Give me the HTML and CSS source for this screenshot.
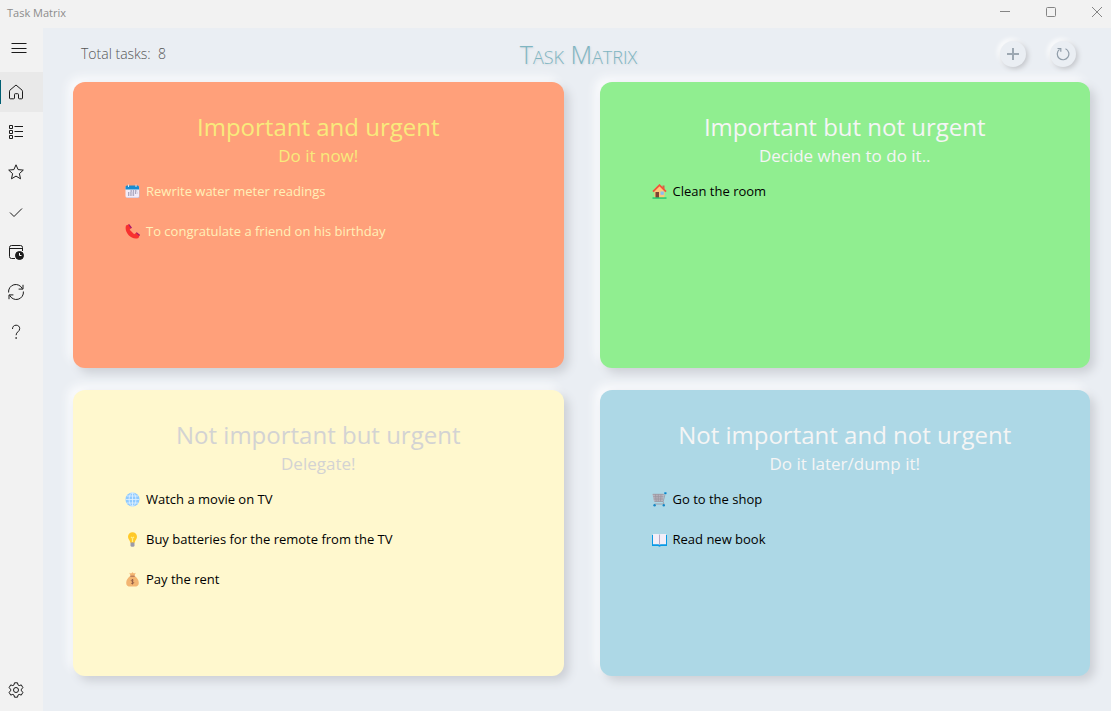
FILE: index.html
```html
<!DOCTYPE html>
<html lang="en">
<head>
  <meta charset="utf-8" />
  <meta name="viewport" content="width=device-width, initial-scale=1" />
  <title>Task Matrix</title>
  <link rel="stylesheet" href="styles.css">
</head>
<body>
  <div class="titlebar">
    <span>Task Matrix</span>
    <div class="window-buttons">
      <button type="button" aria-label="Minimize"><svg viewBox="0 0 10 10"><path d="M0 4.5h10"/></svg></button>
      <button type="button" aria-label="Maximize"><svg viewBox="0 0 10 10"><rect x=".5" y=".5" width="9" height="9" rx="1"/></svg></button>
      <button type="button" aria-label="Close"><svg viewBox="0 0 10 10"><path d="M0 0l10 10M10 0L0 10"/></svg></button>
    </div>
  </div>

  <div class="shell">
    <nav class="sidebar">
      <button type="button" class="menu" aria-label="Menu"><svg viewBox="0 0 16 16"><path d="M.5 3.5h15M.5 8.5h15M.5 12.5h15"/></svg></button>
      <a href="#home" class="active" aria-label="Home"><svg viewBox="0 0 16 16"><path d="M1.5 7.2a1.5 1.5 0 0 1 .5-1.1L8 1l6 5.1a1.5 1.5 0 0 1 .5 1.1V14a.8.8 0 0 1-.8.8h-2.4a.8.8 0 0 1-.8-.8v-3.5a.8.8 0 0 0-.8-.8H7.3a.8.8 0 0 0-.8.8V14a.8.8 0 0 1-.8.8H2.3a.8.8 0 0 1-.8-.8z"/></svg></a>
      <a href="#list" aria-label="List"><svg viewBox="0 0 16 16"><path d="M1.5 1.5h3v3h-3zM1.5 6.5h3v3h-3zM1.5 11.5h3v3h-3zM6.5 2.5h8.5M6.5 7.5h8.5M6.5 12.5h8.5"/></svg></a>
      <a href="#favorites" aria-label="Favorites"><svg viewBox="0 0 16 16"><path d="M8 .8l2.1 4.8 5.2.5-3.9 3.5 1.1 5.2L8 12.1l-4.5 2.7 1.1-5.2L.7 6.1l5.2-.5z"/></svg></a>
      <a href="#done" aria-label="Done"><svg viewBox="0 0 16 16"><path d="M2 8.5l4 4 8-8"/></svg></a>
      <a href="#schedule" aria-label="Schedule"><svg viewBox="0 0 16 16"><path d="M7 14.5H3.5a2 2 0 0 1-2-2v-9a2 2 0 0 1 2-2h9a2 2 0 0 1 2 2V7M1.5 4.5h13"/><circle class="solid" cx="11.5" cy="11.5" r="4"/><path class="hand" d="M11.5 9v2.5h2"/></svg></a>
      <a href="#sync" aria-label="Sync"><svg viewBox="0 0 16 16"><path d="M.6 8.5A7.2 7.2 0 0 1 14.3 4.7M15 .8v4.3h-4.4M15.4 7.5A7.2 7.2 0 0 1 1.7 11.3M1 15.2v-4.3h4.4"/></svg></a>
      <a href="#help" aria-label="Help"><svg viewBox="0 0 16 16"><path d="M4.5 5c0-2.4 1.4-3.8 3.6-3.8s3.6 1.4 3.6 3.4c0 3.2-3.6 3.2-3.6 6.6"/><circle class="solid" cx="8.1" cy="14" r=".4"/></svg></a>
      <a href="#settings" class="settings" aria-label="Settings"><svg viewBox="0 0 16 16"><path d="M6.5.8h3l.5 2.1 1.2.7 2.1-.7 1.6 2.8-1.5 1.5v1.6l1.5 1.5-1.6 2.8-2.1-.7-1.2.7-.5 2.1h-3L6 13.1l-1.2-.7-2.1.7-1.6-2.8 1.5-1.5V7.2L1.1 5.7l1.6-2.8 2.1.7L6 2.9z"/><circle cx="8" cy="8" r="2.5"/></svg></a>
    </nav>

    <main>
      <header>
        <div class="total">Total tasks:&nbsp; 8</div>
        <h1>Task Matrix</h1>
        <div class="actions">
          <button type="button" aria-label="Add task"><svg viewBox="0 0 14 14"><path class="plus" d="M7 1v12M1 7h12"/></svg></button>
          <button type="button" aria-label="Refresh"><svg viewBox="0 0 14 14"><path d="M9.5 1.7A5.8 5.8 0 1 1 3.5 2.4M1.5 1.5h3.3v3.3"/></svg></button>
        </div>
      </header>

      <div class="matrix">
        <section class="card do">
          <h2>Important and urgent</h2>
          <p>Do it now!</p>
          <ul>
            <li>
              <svg viewBox="0 0 15 15"><rect x="1" y="3" width="13.5" height="11" rx="1.5" fill="#bcb3cf"/><rect x=".5" y="2" width="13.5" height="11.5" rx="1.5" fill="#f2ecf8"/><path d="M.5 5.5V3A1.5 1.5 0 0 1 2 1.5h10.5A1.5 1.5 0 0 1 14 3v2.5z" fill="#178bd0"/><path d="M3.5.5v2.5M11 .5v2.5" stroke="#d9e6f2"/><path d="M5.5 7h7M3 9h9.5M3 11h7" stroke="#626486" stroke-width="1.2" stroke-dasharray="1.3 1"/></svg>
              Rewrite water meter readings
            </li>
            <li>
              <svg viewBox="0 0 15 15"><path d="M1 1.5L4 .3l2.5 3.2-1.8 2.3 4.5 4.5 2.3-1.7 3.2 2.5-1.2 2.8C6.5 16.5-1.2 8.5 1 1.5z" fill="#f8312f"/><path d="M3.3.6L4.3.2l2.6 3.2-1 1.3zM11 9l.8-.7 3.1 2.5-.6 1.2z" fill="#a71b70"/></svg>
              To congratulate a friend on his birthday
            </li>
          </ul>
        </section>

        <section class="card decide">
          <h2>Important but not urgent</h2>
          <p>Decide when to do it..</p>
          <ul>
            <li>
              <svg viewBox="0 0 15 15"><path d="M10.5 1.5h2v4h-2z" fill="#c96b4b"/><path d="M2.5 7l5-5.5 5 5.5v7h-10z" fill="#ffc779"/><path d="M3.5 8h3.5v6H3.5z" fill="#7d4533"/><path d="M8.5 7.5h3.3v3.3H8.5z" fill="#86bff2"/><path d="M1 7.7l6.5-6.5L14 7.7" fill="none" stroke="#f4523b" stroke-width="1.8"/><path d="M.5 13.3h14v1.5H.5z" fill="#24ca70"/></svg>
              Clean the room
            </li>
          </ul>
        </section>

        <section class="card delegate">
          <h2>Not important but urgent</h2>
          <p>Delegate!</p>
          <ul>
            <li>
              <svg viewBox="0 0 15 15"><circle cx="7.5" cy="7.5" r="7" fill="#8fcaff"/><g fill="none" stroke="#e3f2ff" stroke-width=".8"><ellipse cx="7.5" cy="7.5" rx="3.4" ry="6.8"/><path d="M7.5.7v13.6M.7 7.5h13.6M2 4h11M2 11h11"/></g></svg>
              Watch a movie on TV
            </li>
            <li>
              <svg viewBox="0 0 15 15"><path d="M5.5 10h4v4l-1 .8h-2l-1-.8z" fill="#9b9baa"/><path d="M3 4.8a4.5 4.5 0 0 1 9 0c0 2.4-1.7 3-2.3 5.7H5.3C4.7 7.8 3 7.2 3 4.8z" fill="#ffc928"/><path d="M6 5l1.5 1.2L9 5M7.5 6v4" fill="none" stroke="#fff08a" stroke-width="1.2"/></svg>
              Buy batteries for the remote from the TV
            </li>
            <li>
              <svg viewBox="0 0 15 15"><path d="M5.5 3.8L4.3.8l1.8.7L7.5.2l1.4 1.3 1.8-.7-1.2 3c2.5 1.8 4.3 4.3 4.3 7.1 0 2.6-1.8 3.7-4 3.7H5.2c-2.2 0-4-1.1-4-3.7 0-2.8 1.8-5.3 4.3-7.1z" fill="#f3b572"/><path d="M5.3 4.2h4.4" stroke="#a56953"/><path d="M8.6 8.2C7.5 7.3 6.2 7.7 6.3 8.6c.1 1.2 2.4.7 2.4 2 0 1.1-1.5 1.3-2.6.6M7.5 7v5.4" fill="none" stroke="#8c5543" stroke-width=".8"/></svg>
              Pay the rent
            </li>
          </ul>
        </section>

        <section class="card later">
          <h2>Not important and not urgent</h2>
          <p>Do it later/dump it!</p>
          <ul>
            <li>
              <svg viewBox="0 0 15 15"><path d="M.5 2h11.3l-1 7.5H2z" fill="#b8b3bd"/><path d="M.8 2.3h11M1.2 4.7h10.3M1.7 7h9.5M3.5 2.3l.7 7M6.3 2.3v7M9 2.3l-.5 7M13.3 1.2L11.2 9.5H2.5M11 9.5l1 2.5H2.5" fill="none" stroke="#9a959f" stroke-width=".8"/><path d="M12.3 1.2h2.2" stroke="#0084ce" stroke-width="1.8"/><circle cx="2.6" cy="13.3" r="1.2" fill="#1687c5"/><circle cx="11.8" cy="13.3" r="1.2" fill="#1687c5"/></svg>
              Go to the shop
            </li>
            <li>
              <svg viewBox="0 0 15 15"><path d="M0 3h15v11H9l-1.5.7L6 14H0z" fill="#0899e5"/><path d="M1 2h5.5l1 .8 1-.8H14v10.3H8.5l-1 .7-1-.7H1z" fill="#f3eef8"/><path d="M7.5 2.8V13" stroke="#b6a9c6"/></svg>
              Read new book
            </li>
          </ul>
        </section>
      </div>
    </main>
  </div>
</body>
</html>
```
FILE: styles.css
```css
* { box-sizing:border-box; }
body {
  margin:0; min-height:100vh; display:flex; flex-direction:column;
  font-family:"Open Sans", "Noto Sans", sans-serif; font-size:13px;
  background:#f2f2f2; color:#000;
}
h1, h2, p, ul { margin:0; padding:0; font-weight:400; }
button { border:none; background:none; padding:0; cursor:pointer; }
svg { display:block; fill:none; }

.titlebar {
  height:28px; padding:0 9px 4px 7px;
  display:flex; align-items:center; justify-content:space-between;
  font-size:11px; color:#8c8c8c;
}
.window-buttons { display:flex; gap:36px; }
.window-buttons svg { width:10px; height:10px; stroke:#858585; }

.shell { flex:1; display:flex; }

.sidebar { width:43px; padding-bottom:1px; display:flex; flex-direction:column; }
.sidebar a, .menu { height:40px; padding-left:8px; display:flex; align-items:center; }
.sidebar .menu { height:44px; padding:0 0 4px 11px; }
.sidebar svg { width:16px; height:16px; stroke:#1b1b1b; stroke-width:1; }
.sidebar .active {
  background:linear-gradient(#005f73, #005f73) left center / 1px 24px no-repeat #e9e9e9;
}
.sidebar .settings { margin-top:auto; }
.solid { fill:#1b1b1b; }
.hand { stroke:#fff; }

main {
  flex:1; padding:0 21px 35px 30px;
  display:flex; flex-direction:column;
  background:#eaeef3;
}
header {
  height:54px; padding:0 14px 3px 8px;
  display:grid; grid-template-columns:1fr auto 1fr; align-items:center;
}
.total { font-size:14px; font-weight:300; color:#555; }
h1 {
  font-size:25px; line-height:32px; font-weight:300; font-variant:small-caps;
  color:#7fb5c1; text-shadow:1px 1px 2px #d3d8df;
}
.actions { display:flex; justify-content:flex-end; gap:24px; }
.actions button {
  width:26px; height:26px; border-radius:50%;
  display:flex; align-items:center; justify-content:center;
  background:#eaeef3; box-shadow:2px 2px 5px #c4c6cb, -2px -2px 5px #fff;
}
.actions svg { width:14px; height:14px; stroke:#8f9ca8; stroke-width:1.2; }
.actions .plus { stroke:#9da8b2; stroke-width:2; }

.matrix {
  flex:1; display:grid; gap:22px 36px;
  grid-template-columns:1fr 1fr; grid-template-rows:1fr 1fr;
}
.card {
  padding:27px 52px; border-radius:12px;
  box-shadow:5px 5px 10px #cdd0d6, -5px -5px 10px #fafbfd;
}
.card h2 { font-size:24px; line-height:36px; text-align:center; }
.card p { font-size:17px; line-height:22px; text-align:center; }
.card ul { margin-top:4px; list-style:none; }
.card li { height:40px; display:flex; align-items:center; gap:6px; }
.card li svg { width:15px; height:15px; flex:none; }

.do { background:#ffa07a; color:#fff0b8; }
.do h2, .do p { color:#f8ea7c; }
.decide { background:#90ee90; }
.decide h2, .decide p { color:#f5f5f5; }
.delegate { background:#fff8ce; }
.delegate h2, .delegate p { color:#d3d3d3; }
.later { background:#add8e6; }
.later h2, .later p { color:#f5f5f5; }
```
